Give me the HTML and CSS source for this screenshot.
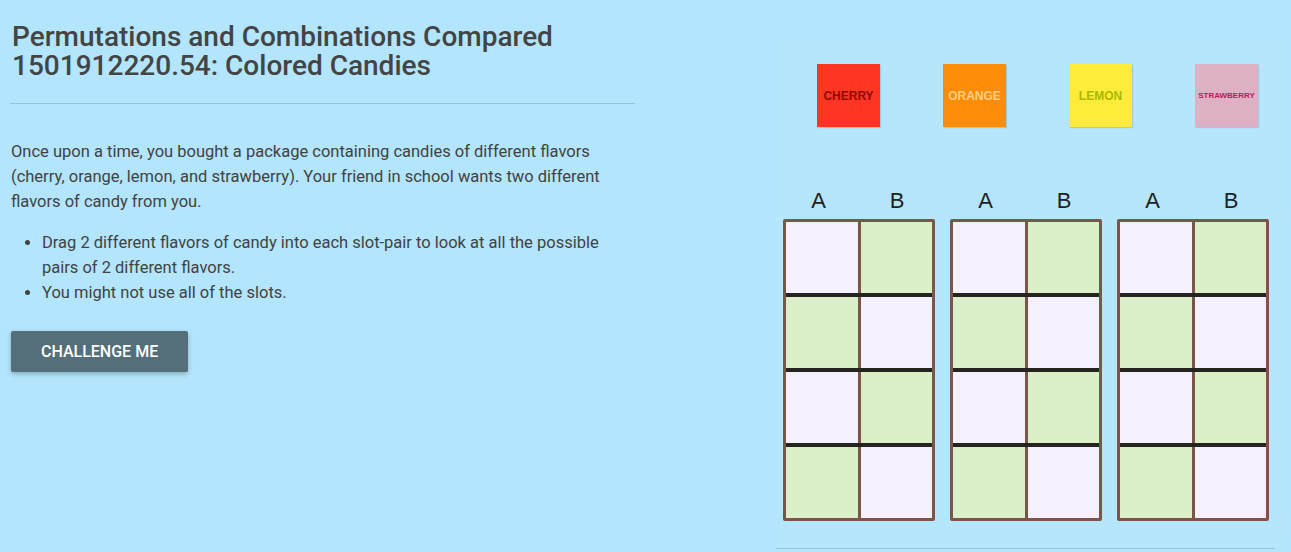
FILE: index.html
```html
<!DOCTYPE html>
<html>
<head>
<meta name="viewport" content="width=device-width, initial-scale=1">
<link rel="stylesheet" href="styles.css">
</head>
<body>

<div class="page">

  <div class="intro">
    <h1 class="title">Permutations and Combinations Compared 1501912220.54: Colored Candies</h1>
    <hr class="rule">

    <p class="story">Once upon a time, you bought a package containing candies of different flavors (cherry, orange, lemon, and strawberry). Your friend in school wants two different flavors of candy from you.</p>

    <ul class="steps">
      <li>Drag 2 different flavors of candy into each slot-pair to look at all the possible pairs of 2 different flavors.</li>
      <li>You might not use all of the slots.</li>
    </ul>

    <button class="challenge">Challenge me</button>
  </div>

  <div class="workspace">

    <div class="candies">
      <div class="candy cherry">CHERRY</div>
      <div class="candy orange">ORANGE</div>
      <div class="candy lemon">LEMON</div>
      <div class="candy strawberry">STRAWBERRY</div>
    </div>

    <div class="pairs">
      <div class="pair">
        <div class="pair-labels"><span>A</span><span>B</span></div>
        <div class="slot-pair">
          <div class="slot-row"><div class="slot lav"></div><div class="slot green"></div></div>
          <div class="slot-row"><div class="slot green"></div><div class="slot lav"></div></div>
          <div class="slot-row"><div class="slot lav"></div><div class="slot green"></div></div>
          <div class="slot-row"><div class="slot green"></div><div class="slot lav"></div></div>
        </div>
      </div>
      <div class="pair">
        <div class="pair-labels"><span>A</span><span>B</span></div>
        <div class="slot-pair">
          <div class="slot-row"><div class="slot lav"></div><div class="slot green"></div></div>
          <div class="slot-row"><div class="slot green"></div><div class="slot lav"></div></div>
          <div class="slot-row"><div class="slot lav"></div><div class="slot green"></div></div>
          <div class="slot-row"><div class="slot green"></div><div class="slot lav"></div></div>
        </div>
      </div>
      <div class="pair">
        <div class="pair-labels"><span>A</span><span>B</span></div>
        <div class="slot-pair">
          <div class="slot-row"><div class="slot lav"></div><div class="slot green"></div></div>
          <div class="slot-row"><div class="slot green"></div><div class="slot lav"></div></div>
          <div class="slot-row"><div class="slot lav"></div><div class="slot green"></div></div>
          <div class="slot-row"><div class="slot green"></div><div class="slot lav"></div></div>
        </div>
      </div>
    </div>

    <hr class="rule bottom">
  </div>

</div>

</body>
</html>
```

FILE: styles.css
```css
body {
  margin: 0;
  background-color: #b3e5fc;
  font-family: Roboto, "Liberation Sans", sans-serif;
  color: #424242;
}

.page {
  display: flex;
}

/* Left column: text and button */
.intro {
  width: 625px;
  padding-left: 10px;
}

.title {
  margin: 0;
  padding: 22px 0 0 2px;
  font-size: 28px;
  line-height: 29px;
  font-weight: 500;
  color: #444;
}

.rule {
  margin: 23px 0 0 0;
  border: none;
  border-top: 1px solid #93c7dd;
}

.story {
  max-width: 605px;
  margin: 35px 0 0 1px;
  font-size: 16.5px;
  line-height: 25px;
}

.steps {
  max-width: 573px;
  margin: 16px 0 0 0;
  padding-left: 32px;
  font-size: 16.5px;
  line-height: 25px;
}

.challenge {
  margin: 26px 0 0 1px;
  height: 41px;
  padding: 0 30px;
  border: none;
  border-radius: 2px;
  background-color: #546e7a;
  color: #fff;
  font-family: Roboto, "Liberation Sans", sans-serif;
  font-size: 16px;
  font-weight: 500;
  text-transform: uppercase;
  box-shadow: 0 2px 5px rgba(0,0,0,0.26);
  cursor: pointer;
}

/* Right column: candies and slots */
.workspace {
  width: 510px;
  margin: 44px 0 0 141px;
  background-color: #b5e6fc;
}

.candies {
  display: flex;
  gap: 63px;
  padding: 20px 0 0 41px;
}

.candy {
  width: 63px;
  height: 63px;
  display: flex;
  align-items: center;
  justify-content: center;
  font-family: "Liberation Sans", Arial, sans-serif;
  font-weight: bold;
  font-size: 12px;
  box-shadow: 1px 1px 1px rgba(0,0,0,0.12);
}

.cherry { background-color: #ff3423; color: #8e0b05; }
.orange { background-color: #ff8c08; color: #ffcf86; }
.lemon { background-color: #ffeb3a; color: #a9bb00; }
.strawberry { background-color: #ddb0c3; color: #c2185b; font-size: 8px; }

.pairs {
  display: flex;
  gap: 15px;
  padding: 61px 0 0 7px;
}

.pair {
  width: 152px;
}

.pair-labels {
  display: grid;
  grid-template-columns: 1fr 1fr;
  text-align: center;
  font-family: "Liberation Sans", Arial, sans-serif;
  font-size: 22px;
  line-height: 26px;
  color: #222;
  margin-bottom: 5px;
}

.pair-labels span:first-child {
  padding-right: 5px;
}

.slot-pair {
  border: 3px solid #7a5649;
  border-radius: 2px;
  background-color: #7a5649;
}

.slot-row {
  display: grid;
  grid-template-columns: 1fr 1fr;
  column-gap: 3px;
  height: 71px;
}

.slot-row + .slot-row {
  border-top: 4px solid #262420;
}

.slot.lav { background-color: #f6f0fd; }
.slot.green { background-color: #dbefc9; }

.bottom {
  margin: 27px 11px 0 0;
}
```
